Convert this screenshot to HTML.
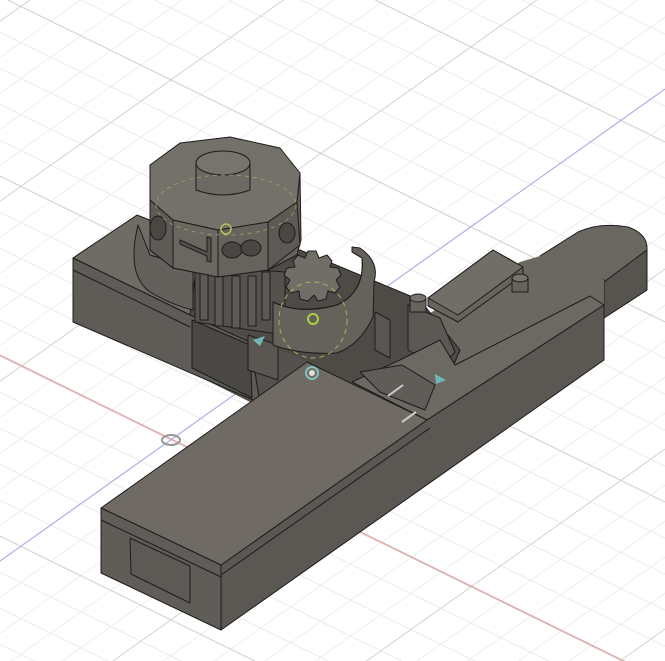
<!DOCTYPE html>
<html><head><meta charset="utf-8"><style>html,body{margin:0;padding:0;background:#fff;overflow:hidden}svg{display:block}</style></head>
<body>
<svg width="665" height="661" viewBox="0 0 665 661" xmlns="http://www.w3.org/2000/svg">
<defs>
<pattern id="g" patternUnits="userSpaceOnUse" width="1" height="1" patternTransform="matrix(30 14.7 30 -21.3 170 440)">
<path d="M0,0H1M0,0V1" stroke="#e6e6e6" stroke-width="0.045" fill="none"/>
</pattern>
<pattern id="gm" patternUnits="userSpaceOnUse" width="5" height="5" patternTransform="matrix(30 14.7 30 -21.3 170 440)">
<path d="M0,0H5M0,0V5" stroke="#d0d0d0" stroke-width="0.06" fill="none"/>
</pattern>
</defs>
<rect width="665" height="661" fill="#fff"/>
<rect width="665" height="661" fill="url(#g)"/>
<rect width="665" height="661" fill="url(#gm)"/>
<line x1="0" y1="355" x2="665" y2="681" stroke="#e89a9a" stroke-width="1"/>
<line x1="0" y1="561" x2="665" y2="89" stroke="#a9a6e8" stroke-width="1"/>
<ellipse cx="171" cy="440" rx="9" ry="5" fill="none" stroke="#999" stroke-width="2"/>

<g stroke="#1c1c1c" stroke-width="1" stroke-linejoin="round">
<!-- rounded tab back right -->
<path d="M540,256 L578,232 Q600,222 628,227 Q648,234 647,250 L647,290 L604,318 L604,280 Z" fill="#6a6761"/>
<path d="M647,250 L647,290 L604,318 L604,282 Z" fill="#57544f"/>
<!-- back platform -->
<path d="M400,330 L520,262 L560,250 L604,280 L604,305 L427,420 L350,382 Z" fill="#6b6862" stroke="none"/>
<!-- dark interior fill -->
<path d="M190,270 L300,250 L420,300 L460,350 L430,420 L300,365 L250,400 L190,370 Z" fill="#4e4b47"/>
<path d="M190,315 L310,362 L250,402 L190,372 Z" fill="#55524e" stroke="none"/>
<!-- left block -->
<path d="M73,258 L137,215 L200,240 L190,315 Z" fill="#6f6b65"/>
<path d="M73,258 L190,315 L250,342 L260,403 L73,322 Z" fill="#5f5c57"/>
<line x1="73" y1="270" x2="190" y2="327"/>
<path d="M192,320 L250,345 L252,398 L192,368 Z" fill="#4a4844"/>
<!-- drum outer ring -->
<path d="M138,225 Q126,275 150,292 Q172,305 193,310 L193,268 L150,255 Z" fill="#64615c"/>
<!-- pillars under drum -->
<path d="M195,265 L285,272 L285,335 L195,322 Z" fill="#55524e"/>
<g fill="#5d5a55"><rect x="200" y="270" width="8" height="50"/><rect x="215" y="274" width="8" height="52"/><rect x="232" y="276" width="8" height="52"/><rect x="248" y="276" width="8" height="50"/><rect x="262" y="272" width="8" height="48"/></g>
<!-- drum sides -->
<path d="M150,165 L150,200 L173,220 L218,230 L268,222 L297,202 L300,173 L301,240 L297,255 L268,270 L218,277 L173,268 L150,250 Z" fill="#65625c"/>
<path d="M150,200 L173,220 L173,268 L150,250 Z" fill="#5e5b56"/>
<path d="M173,220 L218,230 L218,277 L173,268 Z" fill="#6a6761"/>
<path d="M218,230 L268,222 L268,270 L218,277 Z" fill="#66635d"/>
<path d="M268,222 L297,202 L300,245 L268,270 Z" fill="#5d5a55"/>
<!-- drum top -->
<path d="M150,165 L180,143 L230,137 L280,148 L300,173 L297,202 L268,222 L218,230 L173,220 L150,200 Z" fill="#74706a"/>
<!-- button -->
<path d="M196,163 L196,190 Q223,200 250,190 L250,163 Z" fill="#6c6963"/>
<ellipse cx="223" cy="163" rx="27" ry="12" fill="#77736d"/>
<!-- numbers -->
<path d="M180,240 L207,252 L207,237 L211,238 L211,262 L207,261 L207,256 L180,244 Z" fill="#55524d"/>
<ellipse cx="232" cy="250" rx="10" ry="8" fill="#4a4743" /><ellipse cx="251" cy="248" rx="10" ry="8" fill="#4a4743"/>
<ellipse cx="287" cy="233" rx="8" ry="10" fill="#4a4743"/>
<ellipse cx="158" cy="228" rx="8" ry="12" fill="#4a4743"/>
<!-- small boxes center -->
<path d="M375,312 L390,320 L390,358 L375,350 Z" fill="#5a5752"/>
<path d="M248,335 L278,345 L278,380 L248,370 Z" fill="#5a5752"/>
<!-- gear -->
<path d="M308,251 L316,251 L319,258 L327,255 L332,261 L330,267 L338,268 L341,275 L336,280 L340,287 L335,293 L328,291 L326,299 L318,301 L314,295 L308,301 L300,299 L299,291 L291,293 L286,287 L290,280 L284,275 L287,268 L295,267 L293,261 L298,255 L305,258 Z" fill="#716d67"/>
<!-- cup -->
<path d="M352,247 L360,248 Q380,262 374,282 L373,317 Q360,345 337,353 Q300,355 273,345 L273,302 Q300,315 337,305 Q365,292 362,258 L352,252 Z" fill="#65625c"/>
<path d="M273,302 Q300,315 337,305 Q365,292 362,258 L352,252 L352,247" fill="none"/>
<!-- pegs / box at back right -->
<path d="M428,298 L493,250 L523,267 L523,275 L458,322 L428,306 Z" fill="#67645e"/>
<path d="M428,298 L493,250 L523,267 L458,315 Z" fill="#716d67"/>
<path d="M408,305 L408,350 L440,368 L455,352 L440,318 Z" fill="#5c5954"/>
<rect x="410" y="298" width="16" height="14" fill="#66635d"/><ellipse cx="418" cy="298" rx="8" ry="4" fill="#77736d"/>
<rect x="512" y="278" width="16" height="14" fill="#66635d"/><ellipse cx="520" cy="278" rx="8" ry="4" fill="#77736d"/>
<!-- bar B top -->
<path d="M352,382 L400,360 L440,340 L455,365 L590,296 L604,305 L427,420 L352,382 Z" fill="#6c6963"/>
<path d="M360,372 L402,365 L435,385 L425,410 L380,392 Z" fill="#605d58"/>
<!-- combined side face -->
<path d="M221,565 L427,420 L604,305 L604,360 L221,630 Z" fill="#5b5853"/>
<line x1="221" y1="575" x2="430" y2="428"/>
<!-- bar A top -->
<path d="M101,508 L307,362 L427,420 L221,565 Z" fill="#6f6b64"/>
<!-- bar A front -->
<path d="M101,508 L221,565 L221,630 L101,573 Z" fill="#605d58"/>
<line x1="101" y1="520" x2="221" y2="577"/>
<path d="M130,538 L190,566 L190,603 L131,574 Z" fill="#5d5a55"/>
</g>
<!-- gizmo marks -->
<circle cx="312" cy="373" r="6" fill="none" stroke="#7fc4c0" stroke-width="2"/>
<circle cx="312" cy="373" r="3" fill="#ddd"/>
<circle cx="313" cy="319" r="5" fill="none" stroke="#a8d040" stroke-width="2"/>
<circle cx="226" cy="229" r="5" fill="none" stroke="#b6c060" stroke-width="1.5"/>
<ellipse cx="226" cy="205" rx="70" ry="30" fill="none" stroke="#b8b870" stroke-width="1" stroke-dasharray="4 4" opacity="0.6"/>
<ellipse cx="313" cy="320" rx="34" ry="38" fill="none" stroke="#b8c060" stroke-width="1.2" stroke-dasharray="5 4" opacity="0.7"/>
<path d="M253,340 L265,336 L260,346 Z" fill="#6fb8b6"/>
<path d="M435,374 L446,380 L436,384 Z" fill="#6fb8b6"/>
<line x1="388" y1="396" x2="403" y2="385" stroke="#ccc" stroke-width="2"/>
<line x1="402" y1="422" x2="416" y2="412" stroke="#ccc" stroke-width="2"/>
</svg>
</body></html>
